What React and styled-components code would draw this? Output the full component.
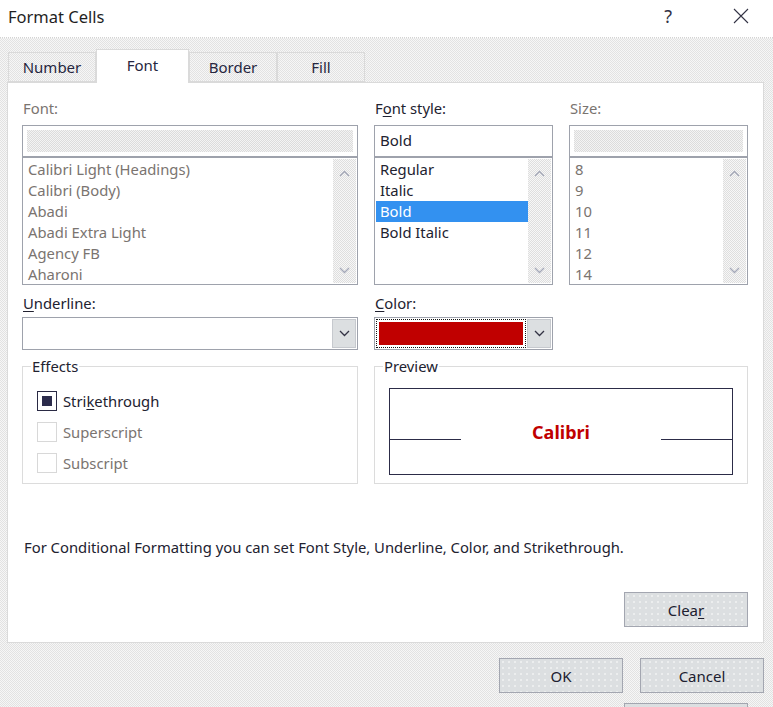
import React from "react";
import styled, { createGlobalStyle } from "styled-components";

const GlobalStyle = createGlobalStyle`
  * {
    margin: 0;
    padding: 0;
    box-sizing: border-box;
  }
  body {
    font-family: "Noto Sans", "Open Sans", sans-serif;
    font-size: 14.8px;
    color: #222230;
    background: #ffffff;
  }
`;

// dithered greys, like the old Windows dialog background
const dither = (a, b) =>
  `repeating-conic-gradient(${a} 0 25%, ${b} 0 50%) 0 0 / 2px 2px`;

const Window = styled.div`
  width: 773px;
  height: 707px;
  display: flex;
  flex-direction: column;
  overflow: hidden;
`;

const TitleBar = styled.div`
  height: 38px;
  display: flex;
  align-items: center;
  padding: 0 0 0 8px;
  background: #ffffff;
  border-bottom: 1px dotted #d4d4d4;
`;

const Title = styled.div`
  font-size: 16.5px;
  color: #1f1f1f;
  margin-top: -4px;
`;

const TitleIcons = styled.div`
  margin-left: auto;
  display: flex;
  align-items: center;
  gap: 61px;
  padding-right: 24px;
  margin-top: -6px;
`;

const Help = styled.span`
  font-size: 18px;
  color: #333344;
`;

const Body = styled.div`
  flex: 1;
  background: ${dither("#f6f6f6", "#e2e2e2")};
  padding: 11px 9px 0 7px;
  display: flex;
  flex-direction: column;
`;

const TabRow = styled.div`
  display: flex;
  align-items: flex-end;
  height: 33px;
  padding-left: 1px;
`;

const Tab = styled.div`
  width: ${(p) => p.$w}px;
  height: ${(p) => (p.$active ? 34 : 30)}px;
  margin-bottom: ${(p) => (p.$active ? -1 : 0)}px;
  display: flex;
  align-items: center;
  justify-content: center;
  font-size: 15px;
  color: #262640;
  background: ${(p) => (p.$active ? "#ffffff" : "transparent")};
  border: 1px solid #dadada;
  border-bottom: ${(p) => (p.$active ? "none" : "1px solid #dadada")};
  padding-bottom: ${(p) => (p.$active ? 4 : 0)}px;
  position: relative;
  z-index: ${(p) => (p.$active ? 2 : 1)};
`;

const Panel = styled.div`
  height: 561px;
  background: #ffffff;
  border: 1px solid #dadada;
  padding: 15px 15px 0 14px;
  display: flex;
  flex-direction: column;
`;

const Grid = styled.div`
  display: grid;
  grid-template-columns: ${(p) => p.$cols};
  column-gap: 16px;
  margin-top: ${(p) => p.$top || 0}px;
`;

const Field = styled.div`
  display: flex;
  flex-direction: column;
`;

const Label = styled.div`
  height: 20px;
  line-height: 20px;
  padding-left: 1px;
  margin-bottom: ${(p) => p.$gap}px;
  color: ${(p) => (p.$disabled ? "#7a7470" : "#222230")};
`;

const U = styled.span`
  text-decoration: underline;
  text-underline-offset: 2px;
`;

const TextBox = styled.div`
  height: 32px;
  border: 1px solid #9ea2ac;
  padding: ${(p) => (p.$disabled ? "4px" : "0 5px 3px")};
  display: flex;
  align-items: center;
  font-size: 15px;
`;

const DisabledFill = styled.div`
  width: 100%;
  height: 100%;
  background: ${dither("#f4f4f4", "#dcdcdc")};
`;

const ListBox = styled.div`
  height: 128px;
  border: 1px solid #9ea2ac;
  display: flex;
`;

const Items = styled.div`
  flex: 1;
  padding: 1px 0 0 1px;
  overflow: hidden;
`;

const Item = styled.div`
  height: 21px;
  line-height: 21px;
  padding-left: 4px;
  white-space: nowrap;
  color: ${(p) => (p.$selected ? "#ffffff" : p.$disabled ? "#7a7470" : "#222230")};
  background: ${(p) => (p.$selected ? "#3391f0" : "transparent")};
`;

const ScrollTrack = styled.div`
  width: 23px;
  margin: 1px 1px 1px 0;
  background: ${dither("#f7f7f7", "#dedede")};
  display: flex;
  flex-direction: column;
  justify-content: space-between;
  align-items: center;
  padding: 11px 0 9px;
`;

const Combo = styled.div`
  height: ${(p) => p.$h}px;
  border: 1px solid #9ea2ac;
  display: flex;
  padding: 1px;
`;

const ComboValue = styled.div`
  flex: 1;
  padding: 2px;
  border: ${(p) => (p.$focus ? "1px dotted #111" : "none")};
  margin-right: 1px;
`;

const Swatch = styled.div`
  width: 100%;
  height: 100%;
  background: #c00000;
`;

const DropButton = styled.div`
  width: 24px;
  background: #dcdfe1;
  border: 1px solid #c6c9ce;
  display: flex;
  align-items: center;
  justify-content: center;
`;

const Group = styled.fieldset`
  border: 1px solid #dcdcdc;
  height: 128px;
  padding: 0 0 0 8px;
  min-width: 0;
`;

const Legend = styled.legend`
  padding: 0 1px;
  line-height: 20px;
  color: #222230;
`;

const CheckList = styled.div`
  padding: 9px 0 0 6px;
`;

const CheckRow = styled.div`
  height: 31px;
  display: flex;
  align-items: center;
  gap: 6px;
  color: ${(p) => (p.$disabled ? "#7a7470" : "#222230")};
`;

const Box = styled.div`
  width: 20px;
  height: 20px;
  border: ${(p) => (p.$disabled ? "1px solid #d8d8d8" : "1.5px solid #2a2a44")};
  display: flex;
  align-items: center;
  justify-content: center;
`;

const Mark = styled.div`
  width: 10px;
  height: 10px;
  background: #2c2c4c;
`;

const PreviewBox = styled.div`
  margin: 12px 14px 0 6px;
  height: 87px;
  border: 1px solid #2c2c48;
  display: grid;
  grid-template-columns: 71px 1fr 71px;
  align-items: center;
`;

const PreviewLine = styled.div`
  height: 1px;
  background: #2c2c48;
  margin-top: 15px;
`;

const PreviewText = styled.div`
  text-align: center;
  font-weight: bold;
  font-size: 18px;
  color: #c00000;
`;

const Note = styled.div`
  margin-top: 53px;
  height: 20px;
  line-height: 20px;
  padding-left: 2px;
`;

const Actions = styled.div`
  display: flex;
  justify-content: flex-end;
  gap: 17px;
  margin-top: ${(p) => p.$top}px;
`;

const Button = styled.div`
  width: 124px;
  height: 35px;
  display: flex;
  align-items: center;
  justify-content: center;
  font-size: 15px;
  color: #202030;
  background: radial-gradient(circle, #f4f5f6 0.6px, transparent 0.9px) 0 0 / 6px 6px,
    #dcdfe1;
  border: 1px solid #a3a6b0;
`;

const BottomStrip = styled.div`
  height: 4px;
  margin-top: 10px;
  padding-left: 617px;
`;

const PeekButton = styled.div`
  width: 124px;
  height: 4px;
  border: 1px solid #a3a6b0;
  border-bottom: none;
  background: #dcdfe1;
`;

const Chevron = ({ up, color = "#a4a8b8", w = 11 }) => (
  <svg width={w} height="7" viewBox="0 0 11 7">
    <polyline
      points={up ? "1,6 5.5,1.5 10,6" : "1,1 5.5,5.5 10,1"}
      fill="none"
      stroke={color}
      strokeWidth="1.3"
    />
  </svg>
);

const ScrollList = ({ items, disabled, selected }) => (
  <ListBox>
    <Items>
      {items.map((it) => (
        <Item key={it} $disabled={disabled} $selected={it === selected}>
          {it}
        </Item>
      ))}
    </Items>
    <ScrollTrack>
      <Chevron up />
      <Chevron />
    </ScrollTrack>
  </ListBox>
);

const fonts = [
  "Calibri Light (Headings)",
  "Calibri (Body)",
  "Abadi",
  "Abadi Extra Light",
  "Agency FB",
  "Aharoni",
];
const styles = ["Regular", "Italic", "Bold", "Bold Italic"];
const sizes = ["8", "9", "10", "11", "12", "14"];
const tabs = [
  { name: "Number", w: 88 },
  { name: "Font", w: 93, active: true },
  { name: "Border", w: 88 },
  { name: "Fill", w: 88 },
];

export default function App() {
  return (
    <Window>
      <GlobalStyle />
      <TitleBar>
        <Title>Format Cells</Title>
        <TitleIcons>
          <Help>?</Help>
          <svg width="16" height="16" viewBox="0 0 16 16">
            <path d="M1 1 L15 15 M15 1 L1 15" stroke="#333344" strokeWidth="1.1" />
          </svg>
        </TitleIcons>
      </TitleBar>
      <Body>
        <TabRow>
          {tabs.map((t) => (
            <Tab key={t.name} $w={t.w} $active={t.active}>
              {t.name}
            </Tab>
          ))}
        </TabRow>
        <Panel>
          <Grid $cols="336px 179px 179px">
            <Field>
              <Label $gap={7} $disabled>
                Font:
              </Label>
              <TextBox $disabled>
                <DisabledFill />
              </TextBox>
              <ScrollList items={fonts} disabled />
            </Field>
            <Field>
              <Label $gap={7}>
                F<U>o</U>nt style:
              </Label>
              <TextBox>Bold</TextBox>
              <ScrollList items={styles} selected="Bold" />
            </Field>
            <Field>
              <Label $gap={7} $disabled>
                Size:
              </Label>
              <TextBox $disabled>
                <DisabledFill />
              </TextBox>
              <ScrollList items={sizes} disabled />
            </Field>
          </Grid>

          <Grid $cols="336px 179px 179px" $top={8}>
            <Field>
              <Label $gap={4}>
                <U>U</U>nderline:
              </Label>
              <Combo $h={33}>
                <ComboValue />
                <DropButton>
                  <Chevron color="#333344" />
                </DropButton>
              </Combo>
            </Field>
            <Field>
              <Label $gap={4}>
                <U>C</U>olor:
              </Label>
              <Combo $h={33}>
                <ComboValue $focus>
                  <Swatch />
                </ComboValue>
                <DropButton>
                  <Chevron color="#333344" />
                </DropButton>
              </Combo>
            </Field>
          </Grid>

          <Grid $cols="336px 374px" $top={6}>
            <Group>
              <Legend>Effects</Legend>
              <CheckList>
                <CheckRow>
                  <Box>
                    <Mark />
                  </Box>
                  <span>
                    Stri<U>k</U>ethrough
                  </span>
                </CheckRow>
                <CheckRow $disabled>
                  <Box $disabled />
                  <span>Superscript</span>
                </CheckRow>
                <CheckRow $disabled>
                  <Box $disabled />
                  <span>Subscript</span>
                </CheckRow>
              </CheckList>
            </Group>
            <Group>
              <Legend>Preview</Legend>
              <PreviewBox>
                <PreviewLine />
                <PreviewText>Calibri</PreviewText>
                <PreviewLine />
              </PreviewBox>
            </Group>
          </Grid>

          <Note>
            For Conditional Formatting you can set Font Style, Underline, Color, and
            Strikethrough.
          </Note>
          <Actions $top={35}>
            <Button>
              Clea<U>r</U>
            </Button>
          </Actions>
        </Panel>
        <Actions $top={15}>
          <Button>OK</Button>
          <Button>Cancel</Button>
        </Actions>
        <BottomStrip>
          <PeekButton />
        </BottomStrip>
      </Body>
    </Window>
  );
}
